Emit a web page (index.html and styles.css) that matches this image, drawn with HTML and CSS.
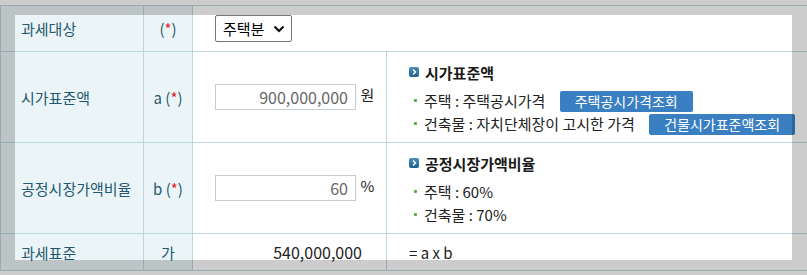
FILE: index.html
```html
<!DOCTYPE html>
<html>
<head>
    <meta charset="utf-8">
    <title>재산세 계산</title>
    <link rel="stylesheet" href="styles.css">
</head>
<body>
    <table class="Calc">
        <colgroup>
            <col class="ColLabel">
            <col class="ColSym">
            <col class="ColInput">
            <col>
        </colgroup>
        <tr class="RowTarget">
            <th>과세대상</th>
            <th class="Sym">(<span class="Req">*</span>)</th>
            <td colspan="2">
                <div class="SelectBox">주택분 <span class="Caret"><svg width="12" height="8" viewBox="0 0 12 8"><path d="M1.5 1.5 L6 6 L10.5 1.5" fill="none" stroke="#111" stroke-width="2.2"/></svg></span></div>
            </td>
        </tr>
        <tr class="RowBig">
            <th>시가표준액</th>
            <th class="Sym">a (<span class="Req">*</span>)</th>
            <td><span class="Field">900,000,000</span> <span class="Unit">원</span></td>
            <td class="Desc">
                <div class="DescTitle"><span class="Arrow"><svg width="10" height="10" viewBox="0 0 10 10"><path d="M4 2.5 L6.5 5 L4 7.5" fill="none" stroke="#fff" stroke-width="1.4"/></svg></span>시가표준액</div>
                <ul>
                    <li>주택 : 주택공시가격 <span class="Btn">주택공시가격조회</span></li>
                    <li>건축물 : 자치단체장이 고시한 가격 <span class="Btn">건물시가표준액조회</span></li>
                </ul>
            </td>
        </tr>
        <tr class="RowBig">
            <th>공정시장가액비율</th>
            <th class="Sym">b (<span class="Req">*</span>)</th>
            <td><span class="Field">60</span> <span class="Unit">%</span></td>
            <td class="Desc">
                <div class="DescTitle"><span class="Arrow"><svg width="10" height="10" viewBox="0 0 10 10"><path d="M4 2.5 L6.5 5 L4 7.5" fill="none" stroke="#fff" stroke-width="1.4"/></svg></span>공정시장가액비율</div>
                <ul>
                    <li>주택 : 60%</li>
                    <li>건축물 : 70%</li>
                </ul>
            </td>
        </tr>
        <tr class="RowLast">
            <th>과세표준</th>
            <th class="Sym">가</th>
            <td class="Result">540,000,000</td>
            <td class="Desc">= a x b</td>
        </tr>
    </table>

    <div class="Spot"></div>
</body>
</html>
```

FILE: styles.css
```css
body {
    margin: 0;
    background: #fff;
    font-family: "Noto Sans CJK KR", "Noto Sans", sans-serif;
    font-size: 15px;
    color: #222;
    overflow: hidden;
}

.Calc {
    border-collapse: collapse;
    margin-top: 5px;
    width: 820px;
    table-layout: fixed;
}

.ColLabel {
    width: 143px;
}

.ColSym {
    width: 49px;
}

.ColInput {
    width: 194px;
}

.Calc th,
.Calc td {
    border: 1px solid #bcd8dd;
    padding: 0;
    vertical-align: middle;
}

.Calc th {
    background: #ebf5f7;
    color: #1f5870;
    font-weight: normal;
    text-align: left;
    padding-left: 20px;
}

.Calc th.Sym {
    text-align: center;
    padding-left: 0;
}

.Calc td {
    padding-left: 22px;
}

.RowTarget {
    height: 46px;
}

.RowBig {
    height: 91px;
}

.RowLast {
    height: 37px;
}

.Req {
    color: #e3231b;
}

.SelectBox {
    display: inline-flex;
    align-items: center;
    justify-content: space-between;
    box-sizing: border-box;
    width: 77px;
    height: 27px;
    border: 1px solid #767676;
    border-radius: 2px;
    padding: 0 6px 0 7px;
    color: #000;
}

.Caret {
    display: flex;
}

.Field {
    display: inline-block;
    box-sizing: border-box;
    width: 141px;
    height: 26px;
    line-height: 24px;
    border: 1px solid #c4cdd0;
    text-align: right;
    padding-right: 7px;
    color: #666;
    font-size: 16px;
    vertical-align: middle;
}

.Unit {
    margin-left: 1px;
    color: #222;
}

.Calc td.Result {
    text-align: right;
    padding-right: 24px;
    padding-left: 0;
    font-size: 16px;
    color: #222;
}

.Calc td.Desc {
    vertical-align: top;
    padding-top: 9px;
}

.Calc .RowLast td.Desc {
    vertical-align: middle;
    padding-top: 0;
}

.DescTitle {
    display: flex;
    align-items: center;
    font-weight: bold;
    color: #1a1a1a;
    height: 22px;
}

.Arrow {
    display: inline-flex;
    width: 10px;
    height: 10px;
    margin-right: 6px;
    border-radius: 2px;
    background: linear-gradient(#4b8fbd, #1f5f8d);
}

.Desc ul {
    list-style: none;
    margin: 6px 0 0 0;
    padding: 0;
}

.Desc li {
    position: relative;
    height: 23px;
    line-height: 23px;
    padding-left: 15px;
    white-space: nowrap;
}

.Desc li::before {
    content: "";
    position: absolute;
    left: 5px;
    top: 10px;
    width: 3px;
    height: 3px;
    background: #5aa34a;
    border-radius: 1px;
}

.Btn {
    display: inline-block;
    height: 21px;
    line-height: 21px;
    padding: 0 15px;
    margin-left: 11px;
    background: #3a7fc2;
    color: #fff;
    border-radius: 2px;
    font-size: 14px;
}

.Spot {
    position: fixed;
    left: 15px;
    top: 15px;
    width: 777px;
    height: 245px;
    box-shadow: 0 0 0 2000px rgba(0, 0, 0, 0.2);
    pointer-events: none;
}
```
